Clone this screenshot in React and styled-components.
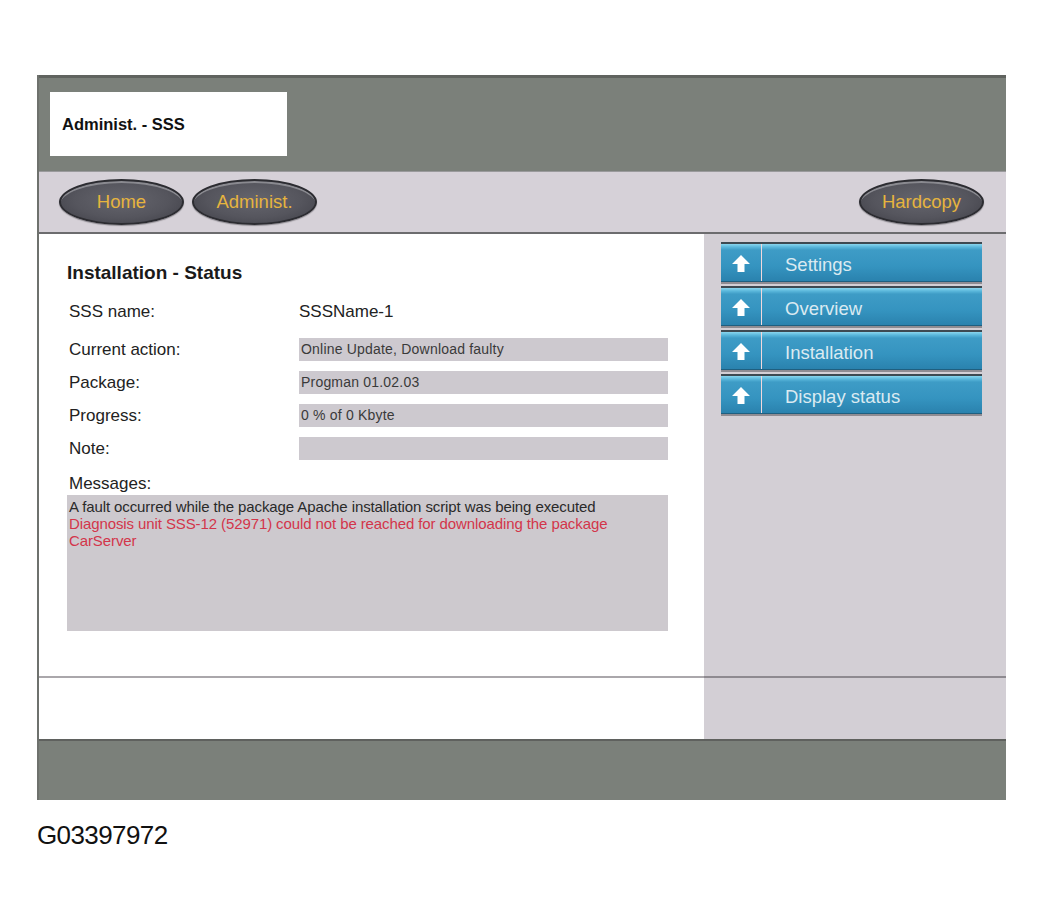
import styled, { createGlobalStyle } from 'styled-components';

const GlobalStyle = createGlobalStyle`
  body {
    margin: 0;
    background: #ffffff;
    font-family: "Liberation Sans", Arial, sans-serif;
  }
`;

const Page = styled.div`
  padding: 75px 0 0 37px;
`;

const Frame = styled.div`
  width: 969px;
  border-left: 2px solid #6e716d;
  box-sizing: border-box;
`;

const Header = styled.div`
  height: 96px;
  background: #7b807a;
  border-top: 3px solid #60635f;
  box-sizing: border-box;
  padding: 14px 0 0 11px;
`;

const TitleBox = styled.div`
  width: 237px;
  height: 64px;
  background: #ffffff;
  display: flex;
  align-items: center;
  padding-left: 12px;
  box-sizing: border-box;
  font-size: 16.5px;
  font-weight: bold;
  color: #111;
`;

const NavBar = styled.div`
  height: 63px;
  background: #d6d1d8;
  border-top: 1px solid #9a9a9c;
  border-bottom: 2px solid #6c6c6e;
  box-sizing: border-box;
  display: flex;
  align-items: center;
  gap: 8px;
  padding: 0 22px 0 20px;
`;

const Spacer = styled.div`
  flex: 1;
`;

const OvalButton = styled.button`
  width: 125px;
  height: 46px;
  border-radius: 50%;
  border: 2px solid #2c2c31;
  background: radial-gradient(ellipse at 50% 45%, #65656d 0%, #55555d 55%, #3e3e46 100%);
  box-shadow: inset 0 3px 0 -1px #8a8a90, 0 1px 1px #8d8a90;
  color: #e6b43e;
  font-family: "Liberation Sans", Arial, sans-serif;
  font-size: 18.5px;
  padding: 0;
  cursor: pointer;
`;

const Main = styled.div`
  display: grid;
  grid-template-columns: 665px 1fr;
  grid-template-rows: 442px 65px;
`;

const Content = styled.div`
  background: #ffffff;
  padding: 28px 0 0 28px;
  box-sizing: border-box;
`;

const SectionTitle = styled.div`
  font-size: 19px;
  font-weight: bold;
  color: #1a1a1a;
  height: 22px;
  line-height: 22px;
  margin-bottom: 16px;
`;

const FieldRow = styled.div`
  display: grid;
  grid-template-columns: 232px 369px;
  align-items: center;
  height: 23px;
  margin-bottom: ${(p) => (p.$gap ? p.$gap : 10)}px;
`;

const Label = styled.div`
  font-size: 17px;
  color: #222;
  padding-left: 2px;
`;

const PlainValue = styled.div`
  font-size: 17px;
  color: #222;
`;

const BoxValue = styled.div`
  height: 23px;
  line-height: 23px;
  background: #cdc9cf;
  font-size: 14px;
  color: #3a3a3a;
  letter-spacing: 0.2px;
  padding-left: 2px;
  white-space: nowrap;
  overflow: hidden;
`;

const MessagesLabel = styled(Label)`
  margin-top: 16px;
  height: 16px;
  line-height: 16px;
`;

const MessagesBox = styled.div`
  width: 601px;
  height: 136px;
  margin-top: 3px;
  background: #cdc9ce;
  padding: 3px 2px;
  box-sizing: border-box;
  font-size: 15px;
  line-height: 17px;
  letter-spacing: -0.1px;
`;

const MessageLine = styled.div`
  color: ${(p) => (p.$error ? '#d3354a' : '#2a2a2a')};
`;

const SideMenu = styled.div`
  background: #d3cfd5;
  padding: 8px 0 0 17px;
  display: flex;
  flex-direction: column;
  gap: 4px;
`;

const MenuButton = styled.div`
  width: 261px;
  height: 40px;
  display: flex;
  box-sizing: border-box;
  border-top: 2px solid #3e4a52;
  border-bottom: 1px solid #1f5f80;
  background: linear-gradient(
    to bottom,
    #8ad6ee 0px,
    #5bb8dc 3px,
    #3e9cc6 6px,
    #3594c0 60%,
    #2a82ae 100%
  );
  box-shadow: 0 2px 0 #8f8c92;
`;

const IconCell = styled.div`
  width: 40px;
  border-right: 1px solid #f2d8dc;
  display: flex;
  align-items: center;
  justify-content: center;
  padding-top: 2px;
`;

const MenuText = styled.div`
  padding: 5px 0 0 23px;
  display: flex;
  align-items: center;
  font-size: 18.5px;
  color: #dbeaf1;
`;

const Strip = styled.div`
  background: ${(p) => (p.$side ? '#d3cfd5' : '#ffffff')};
  border-top: 2px solid ${(p) => (p.$side ? '#8e8a90' : '#aaa7ab')};
  border-bottom: 2px solid #5f615e;
`;

const Footer = styled.div`
  height: 59px;
  background: #7b807a;
`;

const Caption = styled.div`
  margin-top: 20px;
  font-size: 26px;
  color: #111;
  letter-spacing: -0.6px;
`;

function UpArrow() {
  return (
    <svg width="20" height="20" viewBox="0 0 20 20">
      <polygon points="10,1 19,10 13.5,10 13.5,18 6.5,18 6.5,10 1,10" fill="#ffffff" />
    </svg>
  );
}

const fields = [
  { label: 'Current action:', value: 'Online Update, Download faulty' },
  { label: 'Package:', value: 'Progman 01.02.03' },
  { label: 'Progress:', value: '0 % of 0 Kbyte' },
  { label: 'Note:', value: '' },
];

const menu = ['Settings', 'Overview', 'Installation', 'Display status'];

export default function App() {
  return (
    <Page>
      <GlobalStyle />
      <Frame>
        <Header>
          <TitleBox>Administ. - SSS</TitleBox>
        </Header>
        <NavBar>
          <OvalButton>Home</OvalButton>
          <OvalButton>Administ.</OvalButton>
          <Spacer />
          <OvalButton>Hardcopy</OvalButton>
        </NavBar>
        <Main>
          <Content>
            <SectionTitle>Installation - Status</SectionTitle>
            <FieldRow $gap={15}>
              <Label>SSS name:</Label>
              <PlainValue>SSSName-1</PlainValue>
            </FieldRow>
            {fields.map((f) => (
              <FieldRow key={f.label}>
                <Label>{f.label}</Label>
                <BoxValue>{f.value}</BoxValue>
              </FieldRow>
            ))}
            <MessagesLabel>Messages:</MessagesLabel>
            <MessagesBox>
              <MessageLine>A fault occurred while the package Apache installation script was being executed</MessageLine>
              <MessageLine $error>
                Diagnosis unit SSS-12 (52971) could not be reached for downloading the package
                <br />
                CarServer
              </MessageLine>
            </MessagesBox>
          </Content>
          <SideMenu>
            {menu.map((m) => (
              <MenuButton key={m}>
                <IconCell>
                  <UpArrow />
                </IconCell>
                <MenuText>{m}</MenuText>
              </MenuButton>
            ))}
          </SideMenu>
          <Strip />
          <Strip $side />
        </Main>
        <Footer />
      </Frame>
      <Caption>G03397972</Caption>
    </Page>
  );
}
